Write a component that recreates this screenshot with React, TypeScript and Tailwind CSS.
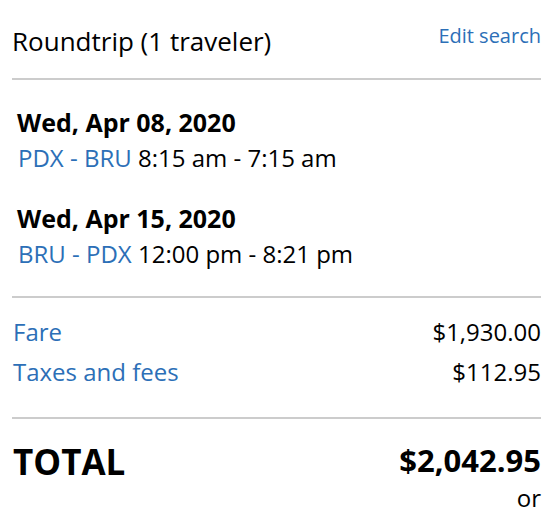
export default function App() {
  return (
    <div className="w-[560px] h-[514px] overflow-hidden bg-white text-black" style={{ fontFamily: '"Open Sans", "Liberation Sans", sans-serif' }}>
      <div className="pl-[12px] pr-[19px]">
        <div className="flex items-start justify-between pt-[22px]">
          <div className="mt-[1px] text-[26px] leading-[36px]">Roundtrip (1 traveler)</div>
          <a className="text-[20px] leading-[28px] text-[#2c6fb7]">Edit search</a>
        </div>
        <div className="mt-[19px] h-[2px] bg-[#cccccc]" />
        <div className="pl-[5px] pt-[24px] pb-[24px]">
          <div className="text-[25px] leading-[36px] font-bold">Wed, Apr 08, 2020</div>
          <div className="pl-[1px] text-[24px] leading-[36px]">
            <span className="text-[#2c6fb7]">PDX - BRU</span> 8:15 am - 7:15 am
          </div>
          <div className="mt-[24px] text-[25px] leading-[36px] font-bold">Wed, Apr 15, 2020</div>
          <div className="pl-[1px] text-[24px] leading-[36px]">
            <span className="text-[#2c6fb7]">BRU - PDX</span> 12:00 pm - 8:21 pm
          </div>
        </div>
        <div className="h-[2px] bg-[#cccccc]" />
        <div className="pt-[14px] pb-[25px] pl-[1px]">
          <div className="flex justify-between text-[24px] leading-[40px]">
            <span className="text-[#2c6fb7]">Fare</span>
            <span>$1,930.00</span>
          </div>
          <div className="flex justify-between text-[24px] leading-[40px]">
            <span className="text-[#2c6fb7]">Taxes and fees</span>
            <span>$112.95</span>
          </div>
        </div>
        <div className="h-[2px] bg-[#cccccc]" />
        <div className="flex items-start justify-between pt-[19px]">
          <div className="pl-[1px] text-[35px] leading-[48px] font-bold">TOTAL</div>
          <div className="flex flex-col items-end">
            <div className="text-[31px] leading-[44px] font-bold">$2,042.95</div>
            <div className="text-[24px] leading-[32px]">or</div>
          </div>
        </div>
      </div>
    </div>
  );
}
